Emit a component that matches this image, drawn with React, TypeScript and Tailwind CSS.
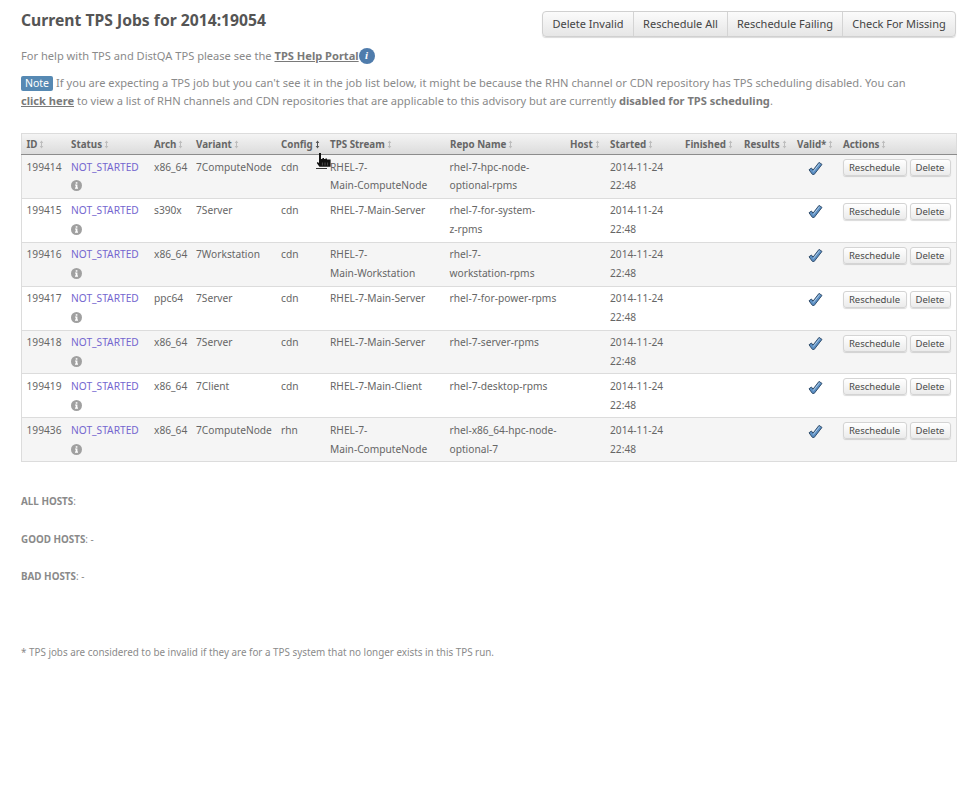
import React from "react";

const headers: [string, string][] = [
  ["ID", "w-[45px]"],
  ["Status", "w-[83px]"],
  ["Arch", "w-[42px]"],
  ["Variant", "w-[85px]"],
  ["Config", "w-[49px]"],
  ["TPS Stream", "w-[120px]"],
  ["Repo Name", "w-[120px]"],
  ["Host", "w-[40px]"],
  ["Started", "w-[75px]"],
  ["Finished", "w-[59px]"],
  ["Results", "w-[53px]"],
  ["Valid*", "w-[46px]"],
  ["Actions", "w-[118px]"],
];

const rows = [
  ["199414", "x86_64", "7ComputeNode", "cdn", ["RHEL-7-", "Main-ComputeNode"], ["rhel-7-hpc-node-", "optional-rpms"]],
  ["199415", "s390x", "7Server", "cdn", ["RHEL-7-Main-Server"], ["rhel-7-for-system-", "z-rpms"]],
  ["199416", "x86_64", "7Workstation", "cdn", ["RHEL-7-", "Main-Workstation"], ["rhel-7-", "workstation-rpms"]],
  ["199417", "ppc64", "7Server", "cdn", ["RHEL-7-Main-Server"], ["rhel-7-for-power-rpms"]],
  ["199418", "x86_64", "7Server", "cdn", ["RHEL-7-Main-Server"], ["rhel-7-server-rpms"]],
  ["199419", "x86_64", "7Client", "cdn", ["RHEL-7-Main-Client"], ["rhel-7-desktop-rpms"]],
  ["199436", "x86_64", "7ComputeNode", "rhn", ["RHEL-7-", "Main-ComputeNode"], ["rhel-x86_64-hpc-node-", "optional-7"]],
] as const;

function rowStyle(i: number) {
  if (i === 0) return { cell: "pt-[3px] leading-[18px]", icon: "mt-[4px]", check: "pt-[6px]", btn: "pt-[4px]", h: "h-[44px]" };
  if (i < 4) return { cell: "pt-[2px] leading-[19px]", icon: "mt-[4px]", check: "pt-[5px]", btn: "pt-[4px]", h: "h-[44px]" };
  if (i === 4) return { cell: "pt-[2px] leading-[19px]", icon: "mt-[4px]", check: "pt-[5px]", btn: "pt-[4px]", h: "h-[43px]" };
  return { cell: "pt-[3px] leading-[19px]", icon: "mt-[4px]", check: "pt-[6px]", btn: "pt-[4px]", h: "h-[44px]" };
}

function SortIcon({ dark }: { dark?: boolean }) {
  return (
    <svg width="5" height="9" viewBox="0 0 5 9" className="inline-block ml-[2px] align-[-1px]">
      <path d="M2.5 0.5 L4.3 3 H3 V6 H4.3 L2.5 8.5 L0.7 6 H2 V3 H0.7 Z" fill={dark ? "#555" : "#bdbdbd"} />
    </svg>
  );
}

function InfoGray() {
  return (
    <svg width="11" height="11" viewBox="0 0 11 11" className="block">
      <circle cx="5.5" cy="5.5" r="5.5" fill="#a0a0a0" />
      <rect x="4.7" y="2.2" width="1.7" height="1.5" fill="#fff" />
      <path d="M4 4.6 H6.4 V7.6 H7 V8.7 H4 V7.6 H4.7 V5.6 H4 Z" fill="#fff" />
    </svg>
  );
}

function Check() {
  return (
    <svg width="15" height="15" viewBox="0 0 15 15" className="block">
      <path d="M1 8.8 L3.4 7 L5 9.2 L11 1.4 L14 3.4 L6.2 13.4 L4.4 13.4 Z" fill="#5b8fc4" stroke="#34506e" strokeWidth="1" strokeLinejoin="round" />
      <path d="M5.2 10.6 L11.6 2.6" stroke="#b4cfe8" strokeWidth="1" fill="none" />
    </svg>
  );
}

function Hand() {
  return (
    <svg width="16" height="18" viewBox="0 0 16 18" className="block">
      <path d="M3 1 H5 V7 H6.4 V6 H8 V7 H9.4 V6.6 H11 V7.6 H12.4 V7.4 H14.6 V14.8 H3.4 L0.8 11 L1.6 10 L3 11 Z" fill="#111" />
      <path d="M6.4 10.5 V13.5 M9 10.5 V13.5 M11.6 10.5 V13.5" stroke="#666" strokeWidth="0.7" />
      <rect x="0" y="16" width="11" height="1" fill="#333" />
    </svg>
  );
}

function SmallBtn({ w, children }: { w: string; children: React.ReactNode }) {
  return (
    <button className={`${w} h-[17px] p-0 text-[9.5px] leading-[15px] text-[#4a4a4a] rounded-[3px] border border-[#d4d4d4] bg-gradient-to-b from-[#ffffff] to-[#ebebeb] shadow-[0_1px_1px_rgba(0,0,0,0.15)]`}>
      {children}
    </button>
  );
}

export default function App() {
  return (
    <div className="w-[970px] h-[792px] bg-white relative overflow-hidden text-[#8a8a8a] font-['Noto_Sans',sans-serif] text-[11.1px]">
      <div className="pl-[21px] pr-[14px] pt-[11px]">
        <div className="flex justify-between items-start h-[27px]">
          <h1 className="-mt-[1px] text-[15.7px] leading-[20px] font-bold text-[#555]">Current TPS Jobs for 2014:19054</h1>
          <div className="flex h-[26px] rounded-[4px] border border-[#d0d0d0] bg-gradient-to-b from-[#fbfbfb] to-[#e6e6e6] shadow-[0_1px_1px_rgba(0,0,0,0.15)] text-[11px] text-[#444] whitespace-nowrap divide-x divide-[#d4d4d4]">
            <button className="w-[91px] p-0">Delete Invalid</button>
            <button className="w-[94px] p-0">Reschedule All</button>
            <button className="w-[115px] p-0">Reschedule Failing</button>
            <button className="w-[112px] p-0">Check For Missing</button>
          </div>
        </div>
        <p className="mt-[8px] leading-[19px] flex items-center h-[19px]">
          <span className="whitespace-pre">For help with TPS and DistQA TPS please see the </span>
          <a className="font-bold underline text-[#7a7a7a]">TPS Help Portal</a>
          <span className="w-[16px] h-[16px] rounded-full bg-[#4f7cac] text-white text-[11px] font-bold italic flex items-center justify-center font-['Liberation_Serif',serif]">i</span>
        </p>
        <div className="mt-[9px] leading-[18px] w-[930px]">
          <div className="whitespace-nowrap h-[18px]">
            <span className="inline-block h-[15px] leading-[15px] px-[4px] mr-[3px] rounded-[2px] bg-[#5689b3] text-white text-[10.5px]">Note</span>
            If you are expecting a TPS job but you can't see it in the job list below, it might be because the RHN channel or CDN repository has TPS scheduling disabled. You can
          </div>
          <div className="whitespace-nowrap h-[18px]">
            <a className="font-bold underline text-[#7a7a7a]">click here</a> to view a list of RHN channels and CDN repositories that are applicable to this advisory but are currently <b className="text-[#7a7a7a]">disabled for TPS scheduling</b>.
          </div>
        </div>
        <table className="mt-[23px] w-[935px] table-fixed border-collapse border border-[#dcdcdc] text-[10.2px] text-[#666]">
          <thead>
            <tr className="h-[21px] bg-gradient-to-b from-[#f4f4f4] to-[#dcdcdc] border-b border-[#8c8c8c]">
              {headers.map(([h, w], i) => (
                <th key={h} className={`${w} pl-[4.5px] pr-0 pt-[2px] text-left text-[9.8px] font-bold text-[#666] whitespace-nowrap`}>
                  {h}
                  <SortIcon dark={i === 4} />
                </th>
              ))}
            </tr>
          </thead>
          <tbody>
            {rows.map((r, i) => {
              const s = rowStyle(i);
              return (
                <tr key={r[0]} className={`${s.h} border-b border-[#dcdcdc] align-top ${i % 2 === 0 ? "bg-[#f5f5f5]" : "bg-white"}`}>
                  <td className={`pl-[4.5px] ${s.cell}`}>{r[0]}</td>
                  <td className={`pl-[4.5px] ${s.cell}`}>
                    <a className="text-[#7466cf]">NOT_STARTED</a>
                    <div className={s.icon}><InfoGray /></div>
                  </td>
                  <td className={`pl-[4.5px] ${s.cell}`}>{r[1]}</td>
                  <td className={`pl-[4.5px] ${s.cell}`}>{r[2]}</td>
                  <td className={`pl-[4.5px] ${s.cell}`}>{r[3]}</td>
                  <td className={`pl-[4.5px] ${s.cell}`}>{r[4].map((t) => <div key={t}>{t}</div>)}</td>
                  <td className={`pl-[4px] ${s.cell}`}>{r[5].map((t) => <div key={t}>{t}</div>)}</td>
                  <td></td>
                  <td className={`pl-[4.5px] ${s.cell}`}><div>2014-11-24</div><div>22:48</div></td>
                  <td></td>
                  <td></td>
                  <td className={s.check}><div className="flex justify-center"><Check /></div></td>
                  <td className={`pl-[4px] ${s.btn}`}>
                    <div className="flex gap-[3px]"><SmallBtn w="w-[64px]">Reschedule</SmallBtn><SmallBtn w="w-[41px]">Delete</SmallBtn></div>
                  </td>
                </tr>
              );
            })}
          </tbody>
        </table>
        <div className="mt-[32px] text-[9.85px] leading-[14px]">
          <p><b className="text-[#8a8a8a]">ALL HOSTS</b>:</p>
          <p className="mt-[24px]"><b className="text-[#8a8a8a]">GOOD HOSTS</b>: -</p>
          <p className="mt-[23px]"><b className="text-[#8a8a8a]">BAD HOSTS</b>: -</p>
          <p className="mt-[62px]">* TPS jobs are considered to be invalid if they are for a TPS system that no longer exists in this TPS run.</p>
        </div>
      </div>
      <div className="absolute left-[316px] top-[152px]"><Hand /></div>
    </div>
  );
}
